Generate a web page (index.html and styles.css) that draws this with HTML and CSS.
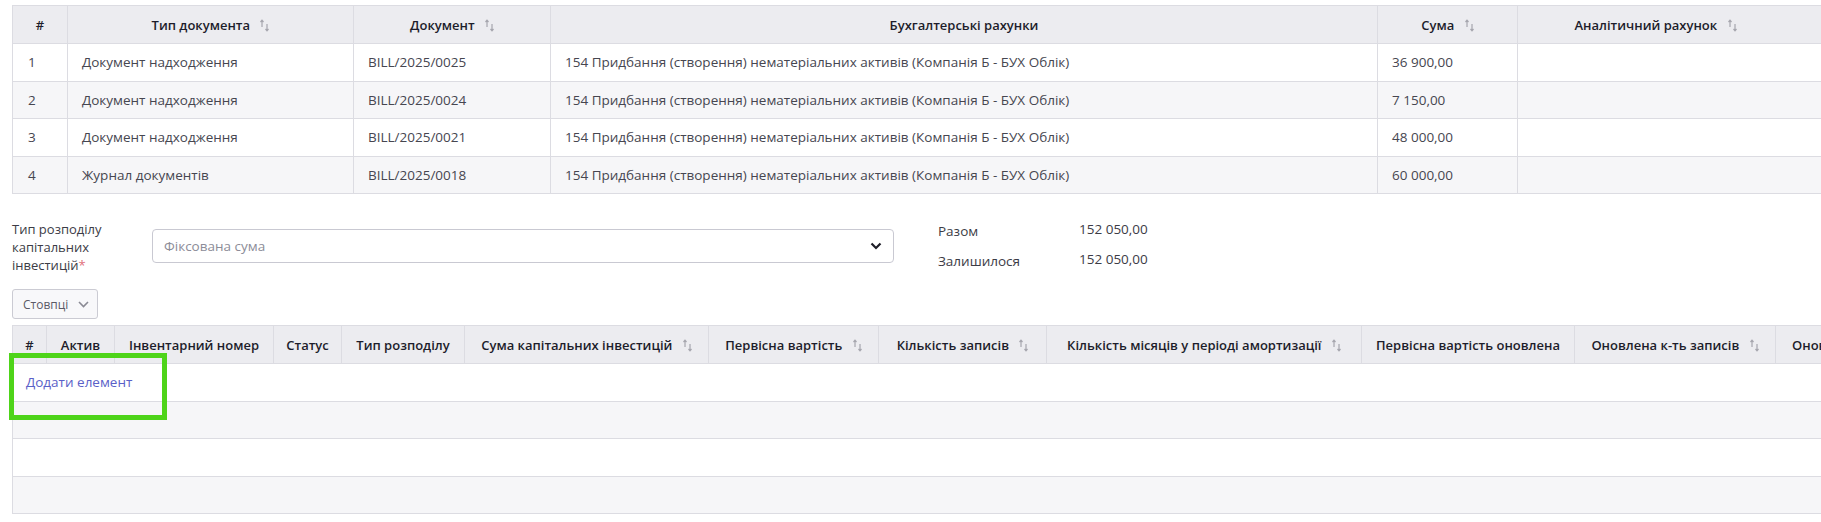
FILE: index.html
```html
<!DOCTYPE html>
<html>
<head>
  <meta charset="utf-8">
  <title>Розподіл капітальних інвестицій</title>
  <link rel="stylesheet" href="styles.css">
</head>
<body>
  <div class="page">

    <!-- Source documents -->
    <table class="grid docs-table">
      <colgroup>
        <col style="width:55px">
        <col style="width:286px">
        <col style="width:197px">
        <col style="width:827px">
        <col style="width:140px">
        <col style="width:320px">
      </colgroup>
      <thead>
        <tr>
          <th>#</th>
          <th>Тип документа <span class="sort"></span></th>
          <th>Документ <span class="sort"></span></th>
          <th>Бухгалтерські рахунки</th>
          <th>Сума <span class="sort"></span></th>
          <th class="last">Аналітичний рахунок <span class="sort"></span></th>
        </tr>
      </thead>
      <tbody>
        <tr>
          <td>1</td>
          <td>Документ надходження</td>
          <td>BILL/2025/0025</td>
          <td>154 Придбання (створення) нематеріальних активів (Компанія Б - БУХ Облік)</td>
          <td>36 900,00</td>
          <td></td>
        </tr>
        <tr>
          <td>2</td>
          <td>Документ надходження</td>
          <td>BILL/2025/0024</td>
          <td>154 Придбання (створення) нематеріальних активів (Компанія Б - БУХ Облік)</td>
          <td>7 150,00</td>
          <td></td>
        </tr>
        <tr>
          <td>3</td>
          <td>Документ надходження</td>
          <td>BILL/2025/0021</td>
          <td>154 Придбання (створення) нематеріальних активів (Компанія Б - БУХ Облік)</td>
          <td>48 000,00</td>
          <td></td>
        </tr>
        <tr>
          <td>4</td>
          <td>Журнал документів</td>
          <td>BILL/2025/0018</td>
          <td>154 Придбання (створення) нематеріальних активів (Компанія Б - БУХ Облік)</td>
          <td>60 000,00</td>
          <td></td>
        </tr>
      </tbody>
    </table>

    <!-- Distribution type + totals -->
    <div class="form-row">
      <label class="field-label">Тип розподілу капітальних інвестицій<span class="req">*</span></label>
      <div class="select-box">
        <span class="placeholder">Фіксована сума</span>
        <svg class="chevron" width="12" height="8" viewBox="0 0 12 8"><path d="M1.5 1.5 L6 6 L10.5 1.5" fill="none" stroke="#1e1e28" stroke-width="2.2"/></svg>
      </div>
      <div class="totals">
        <span>Разом</span><span class="num">152 050,00</span>
        <span>Залишилося</span><span class="num">152 050,00</span>
      </div>
    </div>

    <button class="columns-btn">Стовпці
      <svg width="11" height="7" viewBox="0 0 11 7"><path d="M1 1 L5.5 5.5 L10 1" fill="none" stroke="#8a8a94" stroke-width="1.6"/></svg>
    </button>

    <!-- Assets lines -->
    <div class="lines-wrap">
      <table class="grid lines-table">
        <colgroup>
          <col style="width:34px">
          <col style="width:68px">
          <col style="width:159px">
          <col style="width:68px">
          <col style="width:123px">
          <col style="width:244px">
          <col style="width:170px">
          <col style="width:168px">
          <col style="width:315px">
          <col style="width:213px">
          <col style="width:201px">
          <col style="width:220px">
        </colgroup>
        <thead>
          <tr>
            <th>#</th>
            <th>Актив</th>
            <th>Інвентарний номер</th>
            <th>Статус</th>
            <th>Тип розподілу</th>
            <th>Сума капітальних інвестицій <span class="sort"></span></th>
            <th>Первісна вартість <span class="sort"></span></th>
            <th>Кількість записів <span class="sort"></span></th>
            <th>Кількість місяців у періоді амортизації <span class="sort"></span></th>
            <th>Первісна вартість оновлена</th>
            <th>Оновлена к-ть записів <span class="sort"></span></th>
            <th class="cut">Оновлена сума</th>
          </tr>
        </thead>
        <tbody>
          <tr><td colspan="12" class="add-cell"><a href="#" class="add-link">Додати елемент</a></td></tr>
          <tr><td colspan="12"></td></tr>
          <tr><td colspan="12"></td></tr>
          <tr><td colspan="12"></td></tr>
        </tbody>
      </table>
      <div class="highlight"></div>
    </div>

  </div>
</body>
</html>
```

FILE: styles.css
```css
* {
  box-sizing: border-box;
}

body {
  margin: 0;
  background: #ffffff;
  font-family: "Open Sans", "Noto Sans", sans-serif;
  font-size: 13.5px;
  color: #464650;
  overflow: hidden;
}

.page {
  padding: 5px 0 0 12px;
  width: 2100px;
}

/* Tables */
.grid {
  border-collapse: collapse;
  table-layout: fixed;
  border-left: 1px solid #dcdce2;
  border-top: 1px solid #dcdce2;
}

.grid th {
  background: #ececf0;
  color: #1d1d2b;
  font-size: 13px;
  font-weight: 600;
  text-align: center;
  white-space: nowrap;
  border-right: 1px solid #dcdce2;
  border-bottom: 1px solid #dcdce2;
  padding: 0 12px;
  height: 38px;
  overflow: hidden;
}

.grid th.last {
  padding-right: 56px;
}

.grid th.cut {
  text-align: left;
  padding-left: 16px;
}

.grid td {
  height: 37.5px;
  padding: 0 14px;
  white-space: nowrap;
  border-right: 1px solid #dcdce2;
  border-bottom: 1px solid #dcdce2;
  overflow: hidden;
}

.grid tbody tr:nth-child(even) td {
  background: #f6f6f8;
}

.docs-table td:first-child {
  padding-left: 15px;
}

/* sort arrows */
.sort {
  display: inline-block;
  width: 9px;
  height: 13px;
  margin-left: 7px;
  vertical-align: -2px;
  background: url("data:image/svg+xml;utf8,<svg xmlns='http://www.w3.org/2000/svg' width='9' height='13' viewBox='0 0 9 13'><path d='M2 1.5 V8 M0.5 3 L2 1.2 L3.5 3' fill='none' stroke='%23a6a6ae' stroke-width='1.2'/><path d='M7 5 V11.5 M5.5 10 L7 11.8 L8.5 10' fill='none' stroke='%23a6a6ae' stroke-width='1.2'/></svg>") no-repeat;
}

/* Form row */
.form-row {
  display: flex;
  align-items: flex-start;
  margin-top: 22px;
}

.field-label {
  width: 140px;
  margin-top: 4px;
  font-size: 13px;
  line-height: 18px;
  color: #3c3c46;
  padding-right: 30px;
}

.req {
  color: #e0707a;
}

.select-box {
  width: 742px;
  height: 34px;
  margin-top: 13px;
  border: 1px solid #c9c9d2;
  border-radius: 4px;
  display: flex;
  align-items: center;
  justify-content: space-between;
  padding: 0 11px 0 11px;
}

.placeholder {
  color: #8c8c98;
}

.totals {
  display: grid;
  grid-template-columns: 141px auto;
  margin-left: 44px;
  line-height: 30px;
  color: #3c3c46;
}

.totals .num {
  position: relative;
  top: -2px;
}

/* Columns toggle */
.columns-btn {
  display: flex;
  align-items: center;
  gap: 10px;
  margin-top: 13px;
  height: 30px;
  width: 86px;
  padding: 0 0 0 10px;
  border: 1px solid #cbcbd3;
  border-radius: 3px;
  background: #f8f8fa;
  font-family: "Open Sans", "Noto Sans", sans-serif;
  font-size: 12px;
  color: #5a5a66;
}

/* Lines table */
.lines-wrap {
  position: relative;
  margin-top: 6px;
}

.lines-table td {
  border-right: none;
}

.add-cell {
  padding-left: 13px !important;
}

.add-link {
  color: #5a60c8;
  text-decoration: none;
}

.highlight {
  position: absolute;
  left: -3px;
  top: 28px;
  width: 158px;
  height: 67px;
  border: 5px solid #4ed419;
}
```
